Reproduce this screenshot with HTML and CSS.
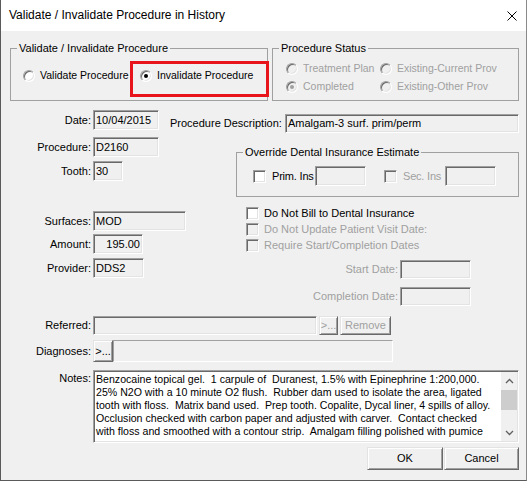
FILE: index.html
```html
<!DOCTYPE html>
<html lang="en">
<head>
    <meta charset="UTF-8">
    <title>Validate / Invalidate Procedure in History</title>
    <link rel="stylesheet" href="styles.css">
</head>
<body>
<div class="window">
    <div class="titlebar">
        <span class="title">Validate / Invalidate Procedure in History</span>
        <svg class="close" width="10" height="10" viewBox="0 0 10 10">
            <path d="M0.5 0.5L9.5 9.5M9.5 0.5L0.5 9.5" stroke="#000" stroke-width="1" fill="none"/>
        </svg>
    </div>

    <div class="dialog">
        <!-- top group boxes -->
        <div class="groups">
            <fieldset class="group group-validate">
                <legend>Validate / Invalidate Procedure</legend>
                <div class="group-body radios-validate">
                    <label class="radio-item"><span class="radio"></span>Validate Procedure</label>
                    <label class="radio-item"><span class="radio checked"></span>Invalidate Procedure</label>
                </div>
            </fieldset>
            <fieldset class="group group-status">
                <legend>Procedure Status</legend>
                <div class="group-body radios-status">
                    <label class="radio-item off"><span class="radio disabled"></span>Treatment Plan</label>
                    <label class="radio-item off"><span class="radio disabled"></span>Existing-Current Prov</label>
                    <label class="radio-item off"><span class="radio disabled checked"></span>Completed</label>
                    <label class="radio-item off"><span class="radio disabled"></span>Existing-Other Prov</label>
                </div>
            </fieldset>
            <div class="highlight"></div>
        </div>

        <!-- date / procedure / tooth + description -->
        <div class="section">
            <div class="col-a-left">
                <div class="row row-date"><span class="lbl">Date:</span><span class="field w-date">10/04/2015</span></div>
                <div class="row row-proc"><span class="lbl">Procedure:</span><span class="field w-proc">D2160</span></div>
                <div class="row row-tooth"><span class="lbl">Tooth:</span><span class="field w-tooth">30</span></div>
            </div>
            <div class="col-a-right">
                <div class="row row-desc"><span class="desc-lbl">Procedure Description:</span><span class="field w-desc">Amalgam-3 surf. prim/perm</span></div>
                <fieldset class="group group-override">
                    <legend>Override Dental Insurance Estimate</legend>
                    <div class="group-body override-body">
                        <span class="checkbox"></span><span class="ins-lbl">Prim. Ins</span><span class="field w-ins"></span>
                        <span class="checkbox disabled sec-check"></span><span class="ins-lbl sec-lbl off">Sec. Ins</span><span class="field w-ins"></span>
                    </div>
                </fieldset>
            </div>
        </div>

        <!-- surfaces / amount / provider + options -->
        <div class="section">
            <div class="col-b-left">
                <div class="row row-surf"><span class="lbl">Surfaces:</span><span class="field w-surf">MOD</span></div>
                <div class="row row-amount"><span class="lbl">Amount:</span><span class="field w-amount">195.00</span></div>
                <div class="row row-prov"><span class="lbl">Provider:</span><span class="field w-prov">DDS2</span></div>
            </div>
            <div class="col-b-right">
                <div class="checks">
                    <label class="check-item"><span class="checkbox"></span>Do Not Bill to Dental Insurance</label>
                    <label class="check-item off"><span class="checkbox disabled"></span>Do Not Update Patient Visit Date:</label>
                    <label class="check-item off"><span class="checkbox disabled"></span>Require Start/Completion Dates</label>
                </div>
                <div class="row date-row"><span class="date-lbl off">Start Date:</span><span class="field w-dates"></span></div>
                <div class="row date-row date-row2"><span class="date-lbl off">Completion Date:</span><span class="field w-dates"></span></div>
            </div>
        </div>

        <!-- referred / diagnoses / notes -->
        <div class="row row-ref">
            <span class="lbl">Referred:</span>
            <span class="field w-ref"></span>
            <span class="btn btn-dots off">&gt;...</span>
            <span class="btn btn-remove off">Remove</span>
        </div>
        <div class="row row-diag">
            <span class="lbl">Diagnoses:</span>
            <span class="btn btn-diag">&gt;...</span>
            <span class="diag-panel"></span>
        </div>
        <div class="row row-notes">
            <span class="lbl notes-lbl">Notes:</span>
            <div class="notes">
                <div class="notes-text">Benzocaine topical gel.  1 carpule of  Duranest, 1.5% with Epinephrine 1:200,000.
25% N2O with a 10 minute O2 flush.  Rubber dam used to isolate the area, ligated
tooth with floss.  Matrix band used.  Prep tooth. Copalite, Dycal liner, 4 spills of alloy.
Occlusion checked with carbon paper and adjusted with carver.  Contact checked
with floss and smoothed with a contour strip.  Amalgam filling polished with pumice</div>
                <div class="scrollbar">
                    <span class="scroll-btn">
                        <svg width="9" height="6" viewBox="0 0 9 6"><path d="M1 5L4.5 1.5L8 5" stroke="#606060" stroke-width="1.3" fill="none"/></svg>
                    </span>
                    <span class="scroll-track"><span class="scroll-thumb"></span></span>
                    <span class="scroll-btn">
                        <svg width="9" height="6" viewBox="0 0 9 6"><path d="M1 1L4.5 4.5L8 1" stroke="#606060" stroke-width="1.3" fill="none"/></svg>
                    </span>
                </div>
            </div>
        </div>

        <div class="buttons">
            <span class="btn btn-ok">OK</span>
            <span class="btn btn-cancel">Cancel</span>
        </div>
    </div>
</div>
</body>
</html>
```

FILE: styles.css
```css
body {
    margin: 0;
    font-family: "Liberation Sans", Arial, sans-serif;
    font-size: 11px;
    line-height: 13px;
    color: #000;
    background: #fff;
}

.window {
    width: 527px;
    height: 481px;
    box-sizing: border-box;
    border: 1px solid #5a5a5a;
    border-top: none;
    border-right-color: #8a8a8a;
    background: #f0f0f0;
    display: flex;
    flex-direction: column;
}

.titlebar {
    height: 31px;
    flex: none;
    background: #fff;
    display: flex;
    align-items: center;
    padding: 0 9px 0 8px;
    font-size: 12px;
}

.close {
    margin-left: auto;
}

.dialog {
    padding: 11px 7px 0 0;
}

.off {
    color: #a0a0a0;
}

/* group boxes */
.groups {
    display: flex;
    position: relative;
    margin-left: 9px;
}

.group {
    margin: 0;
    padding: 0;
    border: 1px solid #a0a0a0;
    min-width: 0;
    box-sizing: border-box;
}

.group legend {
    margin-left: 6px;
    padding: 0 2px;
    line-height: 13px;
}

.group-body {
    box-sizing: border-box;
}

.group-validate {
    width: 258px;
}

.group-status {
    width: 247px;
    margin-left: 4px;
}

.radios-validate {
    height: 45px;
    padding: 14px 0 0 12px;
    display: grid;
    grid-template-columns: 117px auto;
    align-content: start;
}

.radios-status {
    height: 45px;
    padding: 7px 0 0 13px;
    display: grid;
    grid-template-columns: 94px auto;
    row-gap: 5px;
    align-content: start;
}

.radio-item {
    display: flex;
    align-items: center;
    height: 13px;
    white-space: nowrap;
    font-size: 10.5px;
}

.radio {
    width: 12px;
    height: 12px;
    box-sizing: border-box;
    border-radius: 50%;
    border: 1px solid;
    border-color: #a0a0a0 #fff #fff #a0a0a0;
    box-shadow: inset 1px 1px #696969, inset -1px -1px #e3e3e3;
    background: #fff;
    margin-right: 5px;
    position: relative;
    flex: none;
}

.radio.disabled {
    background: #f0f0f0;
}

.radio.checked::after {
    content: "";
    position: absolute;
    left: 3px;
    top: 3px;
    width: 4px;
    height: 4px;
    border-radius: 50%;
    background: #000;
}

.radio.disabled.checked::after {
    background: #a0a0a0;
}

.highlight {
    position: absolute;
    left: 120px;
    top: 19px;
    width: 139px;
    height: 36px;
    box-sizing: border-box;
    border: 3px solid #e8141c;
}

/* fields */
.field {
    box-sizing: border-box;
    height: 20px;
    padding: 0 2px;
    display: flex;
    align-items: center;
    background: #f0f0f0;
    border: 1px solid;
    border-color: #a0a0a0 #fff #fff #a0a0a0;
    box-shadow: inset 1px 1px #696969, inset -1px -1px #e3e3e3;
    white-space: nowrap;
    overflow: hidden;
    flex: none;
}

.checkbox {
    width: 13px;
    height: 13px;
    box-sizing: border-box;
    border: 1px solid;
    border-color: #a0a0a0 #fff #fff #a0a0a0;
    box-shadow: inset 1px 1px #696969, inset -1px -1px #e3e3e3;
    background: #fff;
    margin-right: 5px;
    flex: none;
}

.checkbox.disabled {
    background: #f0f0f0;
}

.section {
    display: flex;
}

.row {
    display: flex;
    align-items: center;
}

.lbl {
    width: 92px;
    flex: none;
    text-align: right;
    padding-right: 2px;
    box-sizing: border-box;
}

/* section a */
.col-a-left {
    width: 169px;
    flex: none;
}

.col-a-right {
    flex: 1;
}

.row-date { margin-top: 9px; }
.row-proc { margin-top: 7px; }
.row-tooth { margin-top: 4px; }

.w-date, .w-proc { width: 66px; }
.w-tooth { width: 30px; }

.row-desc { margin-top: 13px; }

.desc-lbl {
    width: 115px;
    flex: none;
}

.w-desc {
    flex: 1;
    height: 19px;
}

.group-override {
    margin: 13px 0 0 66px;
}

.override-body {
    height: 37px;
    padding: 7px 0 0 16px;
    display: flex;
    align-items: flex-start;
}

.override-body .checkbox {
    margin: 4px 6px 0 0;
}

.override-body .sec-check {
    margin-left: 18px;
}

.ins-lbl {
    width: 43px;
    flex: none;
    line-height: 20px;
    white-space: nowrap;
    letter-spacing: -0.2px;
}

.sec-lbl {
    width: 42px;
}

.w-ins {
    width: 51px;
}

/* section b */
.col-b-left {
    width: 245px;
    flex: none;
}

.col-b-right {
    flex: 1;
}

.row-surf { margin-top: 14px; }
.row-amount { margin-top: 3px; }
.row-prov { margin-top: 4px; }

.w-surf { width: 93px; }
.w-amount { width: 50px; justify-content: flex-end; }
.w-prov { width: 51px; }

.checks {
    margin-top: 8px;
}

.check-item {
    display: flex;
    align-items: center;
    height: 16px;
    white-space: nowrap;
}

.date-row { margin-top: 7px; }
.date-row2 { margin-top: 8px; }

.date-lbl {
    width: 154px;
    flex: none;
    text-align: right;
    padding-right: 2px;
    box-sizing: border-box;
}

.w-dates {
    width: 71px;
    height: 19px;
}

/* section c */
.row-ref { margin-top: 10px; }

.w-ref {
    width: 224px;
    height: 19px;
}

.btn {
    box-sizing: border-box;
    height: 23px;
    display: flex;
    align-items: center;
    justify-content: center;
    background: #f0f0f0;
    border: 1px solid;
    border-color: #e3e3e3 #696969 #696969 #e3e3e3;
    box-shadow: inset 1px 1px #fff, inset -1px -1px #a0a0a0;
    flex: none;
    white-space: nowrap;
}

.btn-dots {
    width: 19px;
    height: 19px;
    margin-left: 2px;
}

.btn-remove {
    width: 51px;
    height: 19px;
    margin-left: 2px;
}

.row-diag {
    margin-top: 5px;
}

.btn-diag {
    width: 20px;
    height: 22px;
}

.diag-panel {
    width: 280px;
    height: 22px;
    box-sizing: border-box;
    border: 1px solid;
    border-color: #a0a0a0 #fff #fff #a0a0a0;
}

.row-notes {
    margin-top: 8px;
    align-items: flex-start;
}

.notes-lbl {
    padding-top: 2px;
}

.notes {
    flex: 1;
    height: 73px;
    box-sizing: border-box;
    display: flex;
    padding: 1px 1px 1px 0;
    background: #fff;
    border: 1px solid;
    border-color: #a0a0a0 #fff #fff #a0a0a0;
    box-shadow: inset 1px 1px #696969, inset -1px -1px #e3e3e3;
}

.notes-text {
    flex: 1;
    padding: 1px 0 0 2px;
    font-size: 10.6px;
    white-space: pre;
    overflow: hidden;
}

.scrollbar {
    width: 16px;
    flex: none;
    display: flex;
    flex-direction: column;
    background: #f0f0f0;
}

.scroll-btn {
    height: 17px;
    display: flex;
    align-items: center;
    justify-content: center;
    flex: none;
}

.scroll-track {
    flex: 1;
}

.scroll-thumb {
    display: block;
    height: 20px;
    margin-top: 1px;
    background: #cdcdcd;
}

.buttons {
    display: flex;
    justify-content: flex-end;
    margin-top: 4px;
}

.btn-ok {
    width: 76px;
}

.btn-cancel {
    width: 75px;
    margin-left: 1px;
}
```
